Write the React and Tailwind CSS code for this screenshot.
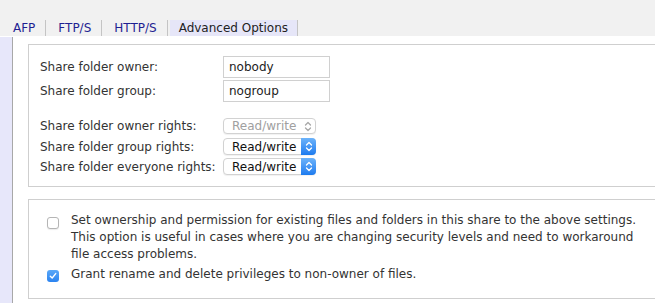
import React from "react";

function Stepper({ disabled }) {
  return (
    <svg width="8" height="11" viewBox="0 0 8 11" fill="none">
      <path d="M1.5 4 L4 1.5 L6.5 4" stroke={disabled ? "#a8a8a8" : "#ffffff"} strokeWidth="1.3" strokeLinecap="round" strokeLinejoin="round" />
      <path d="M1.5 7 L4 9.5 L6.5 7" stroke={disabled ? "#a8a8a8" : "#ffffff"} strokeWidth="1.3" strokeLinecap="round" strokeLinejoin="round" />
    </svg>
  );
}

function Select({ disabled, h }) {
  return (
    <div className={`flex ${h} w-[93px] rounded-[4px] border border-[#d2d2d2] bg-white shadow-[0_1px_1px_rgba(0,0,0,0.06)]`}>
      <div className={`flex-1 flex items-center pl-[8px] text-[12px] ${disabled ? "text-[#a0a0a0]" : "text-[#111]"}`}>Read/write</div>
      {disabled ? (
        <div className="w-[15px] flex items-center justify-center">
          <Stepper disabled />
        </div>
      ) : (
        <div className="w-[15px] -my-px -mr-px rounded-r-[4px] bg-gradient-to-b from-[#6cb3fa] to-[#1a7bef] flex items-center justify-center">
          <Stepper />
        </div>
      )}
    </div>
  );
}

function Checkbox({ checked }) {
  if (checked) {
    return (
      <div className="w-[12px] h-[12px] rounded-[3px] bg-gradient-to-b from-[#5aa8f8] to-[#2a83f0] flex items-center justify-center shrink-0">
        <svg width="8" height="8" viewBox="0 0 8 8">
          <path d="M1.3 4.2 L3.2 6 L6.7 1.6" stroke="#fff" strokeWidth="1.4" fill="none" strokeLinecap="round" strokeLinejoin="round" />
        </svg>
      </div>
    );
  }
  return <div className="w-[12px] h-[12px] rounded-[3px] border border-[#b5b5b5] bg-white shadow-[0_1px_1px_rgba(0,0,0,0.08)] shrink-0" />;
}

export default function App() {
  return (
    <div className="w-[655px] h-[303px] overflow-hidden bg-white font-['DejaVu_Sans',sans-serif] text-[12px] text-[#333]">
      <div className="h-[36px] bg-[#f1f1f1] flex items-end pl-[1px]">
        <div className="ml-[2px] h-[16px] flex items-center px-[10px] border-r border-[#c4c4c4] text-[#1f1f92]">AFP</div>
        <div className="ml-[2px] h-[16px] flex items-center px-[10px] border-r border-[#c4c4c4] text-[#1f1f92]">FTP/S</div>
        <div className="ml-[2px] h-[16px] flex items-center px-[10px] border-r border-[#c4c4c4] text-[#1f1f92]">HTTP/S</div>
        <div className="ml-[2px] h-[16px] flex items-center pl-[9px] pr-[9px] border-r border-[#c4c4c4] bg-[#e6e6f8] text-[#222]">Advanced Options</div>
      </div>
      <div className="flex h-[267px]">
        <div className="w-[13px] shrink-0 mt-[1px] bg-[#e7e7fa] border-r border-[#a8a8a8]" />
        <div className="pl-[15px] pt-[8px] shrink-0">
          <div className="w-[700px] border border-[#cfcfcf] pt-[11px] pb-[11px] pl-[11px]">
            <div className="flex items-center h-[22px]">
              <div className="w-[183px]">Share folder owner:</div>
              <div className="w-[107px] h-[22px] border border-[#d0d0d0] flex items-center px-[5px] text-[#222]">nobody</div>
            </div>
            <div className="flex items-center h-[22px] mt-[2px]">
              <div className="w-[183px]">Share folder group:</div>
              <div className="w-[107px] h-[22px] border border-[#d0d0d0] flex items-center px-[5px] text-[#222]">nogroup</div>
            </div>
            <div className="flex items-center h-[16px] mt-[16px]">
              <div className="w-[183px]">Share folder owner rights:</div>
              <Select disabled h="h-[16px]" />
            </div>
            <div className="flex items-center h-[17px] mt-[4px]">
              <div className="w-[183px]">Share folder group rights:</div>
              <Select h="h-[17px]" />
            </div>
            <div className="flex items-center h-[17px] mt-[3px]">
              <div className="w-[183px]">Share folder everyone rights:</div>
              <Select h="h-[17px]" />
            </div>
          </div>
          <div className="w-[700px] mt-[12px] border border-[#cfcfcf] pt-[12px] pb-[15px] pl-[18px] leading-[17px]">
            <div className="flex">
              <div className="pt-[5px]"><Checkbox /></div>
              <div className="ml-[12px] w-[600px]">
                Set ownership and permission for existing files and folders in this share to the above settings.<br />
                This option is useful in cases where you are changing security levels and need to workaround<br />
                file access problems.
              </div>
            </div>
            <div className="flex mt-[3px]">
              <div className="pt-[4px]"><Checkbox checked /></div>
              <div className="ml-[12px]">Grant rename and delete privileges to non-owner of files.</div>
            </div>
          </div>
        </div>
      </div>
    </div>
  );
}
